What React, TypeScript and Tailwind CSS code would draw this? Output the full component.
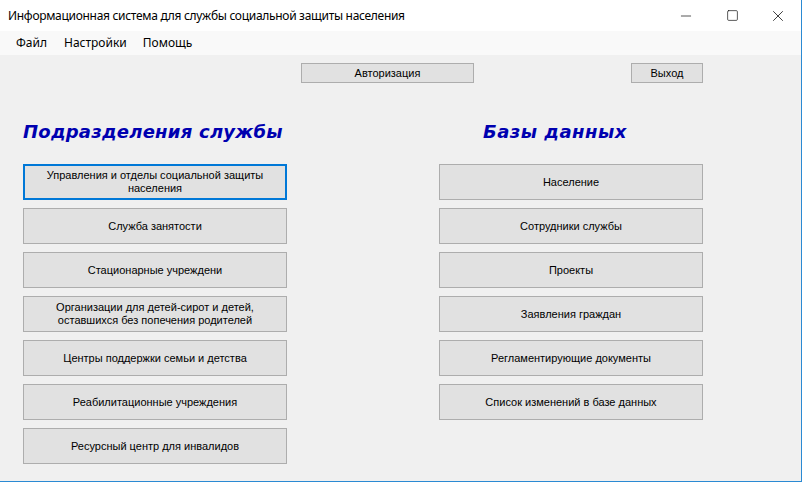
import { Minus, Square, X } from "lucide-react";

const departments = [
  "Управления и отделы социальной защиты\nнаселения",
  "Служба занятости",
  "Стационарные учреждени",
  "Организации для детей-сирот и детей,\nоставшихся без попечения родителей",
  "Центры поддержки семьи и детства",
  "Реабилитационные учреждения",
  "Ресурсный центр для инвалидов",
];

const databases = [
  "Население",
  "Сотрудники службы",
  "Проекты",
  "Заявления граждан",
  "Регламентирующие документы",
  "Список изменений в базе данных",
];

function FormButton({ label, focused }: { label: string; focused?: boolean }) {
  return (
    <button
      className={`w-[264px] h-[36px] bg-[#e1e1e1] flex items-center justify-center text-center whitespace-pre-line text-[11px] leading-[13px] text-black ${
        focused ? "border-2 border-[#0078d7]" : "border border-[#adadad]"
      }`}
    >
      {label}
    </button>
  );
}

export default function App() {
  return (
    <div className="w-[802px] h-[482px] bg-[#f0f0f0] border-r border-b border-[#2b8ad3] flex flex-col overflow-hidden font-['Liberation_Sans',Arial,sans-serif]">
      <div className="h-[31px] bg-white flex items-center shrink-0">
        <span className="pl-[8px] text-[12px] text-black font-['Noto_Sans',sans-serif] tracking-[-0.3px] flex-1">
          Информационная система для службы социальной защиты населения
        </span>
        <div className="flex h-full">
          <div className="w-[46px] flex items-center justify-center">
            <Minus size={16} strokeWidth={1} className="text-black" />
          </div>
          <div className="w-[46px] flex items-center justify-center">
            <Square size={13} strokeWidth={1.2} className="text-black" />
          </div>
          <div className="w-[46px] flex items-center justify-center">
            <X size={18} strokeWidth={1} className="text-black" />
          </div>
        </div>
      </div>

      <div className="h-[24px] bg-[#f9f9f9] flex items-center text-[12px] text-black font-['Noto_Sans',sans-serif] shrink-0">
        <span className="ml-[16px]">Файл</span>
        <span className="ml-[17px]">Настройки</span>
        <span className="ml-[16px]">Помощь</span>
      </div>

      <div className="flex mt-[8px] h-[20px] shrink-0">
        <button className="ml-[301px] w-[173px] h-[20px] bg-[#e1e1e1] border border-[#adadad] text-[11px] text-black">
          Авторизация
        </button>
        <button className="ml-[157px] w-[72px] h-[20px] bg-[#e1e1e1] border border-[#adadad] text-[11px] text-black">
          Выход
        </button>
      </div>

      <div className="grid grid-cols-[264px_264px] pl-[23px] gap-x-[152px]">
        <div className="flex flex-col">
          <div className="h-[81px] pt-[38px] whitespace-nowrap">
            <h1 className="text-[18px] font-bold italic text-[#0000b0] font-['DejaVu_Sans',Verdana,sans-serif] leading-[22px] tracking-[0.25px]">
              Подразделения службы
            </h1>
          </div>
          <div className="flex flex-col gap-[8px]">
            {departments.map((d, i) => (
              <FormButton key={d} label={d} focused={i === 0} />
            ))}
          </div>
        </div>
        <div className="flex flex-col">
          <div className="h-[81px] pt-[38px] pl-[44px] whitespace-nowrap">
            <h2 className="text-[18px] font-bold italic text-[#0000b0] font-['DejaVu_Sans',Verdana,sans-serif] leading-[22px] tracking-[0.5px]">
              Базы данных
            </h2>
          </div>
          <div className="flex flex-col gap-[8px]">
            {databases.map((d) => (
              <FormButton key={d} label={d} />
            ))}
          </div>
        </div>
      </div>
    </div>
  );
}
